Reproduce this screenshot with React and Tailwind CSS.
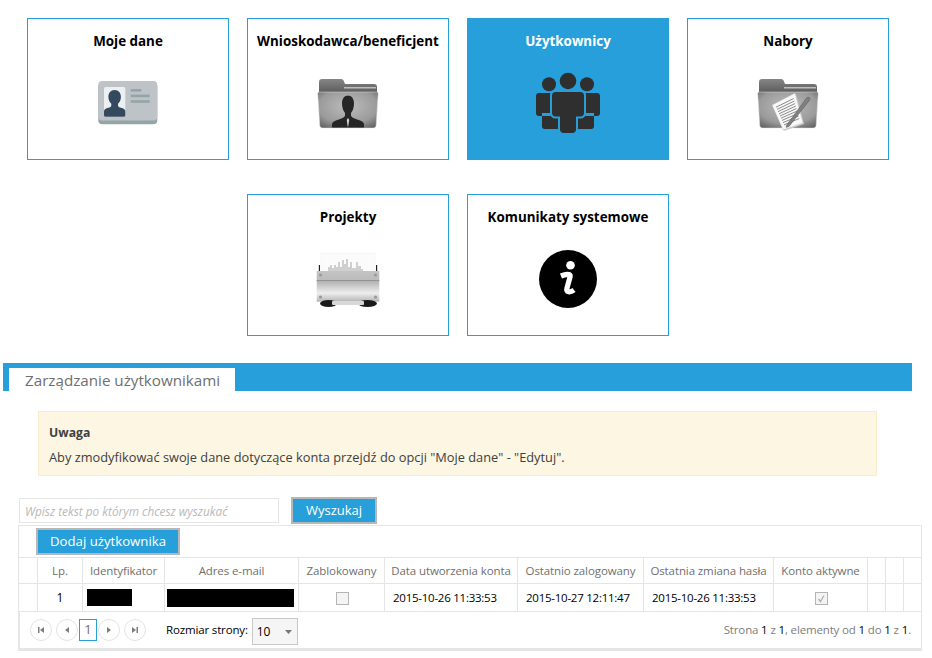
const BLUE = 'bg-[#269fdb]';

const CardIcon = () => (
  <svg width="64" height="64" viewBox="0 0 64 64">
    <rect x="2.3" y="12" width="59" height="41.3" rx="4" fill="#95a5a6" />
    <rect x="2.3" y="10" width="59" height="39.5" rx="4" fill="#bdc3c7" />
    <rect x="8" y="16" width="21.3" height="29.7" rx="1.5" fill="#ecf0f1" />
    <path d="M18.6 19c-4 0-6.2 3-6.2 7 0 3 1.3 5.300 2.900 6.700v1.800c0 1.200-1.300 1.800-3 2.300-2.300.7-4.300 1.400-4.300 3.500v3.900c0 .9.600 1.500 1.500 1.500h18.300c.9 0 1.500-.6 1.500-1.500v-3.900c0-2.100-2-2.800-4.300-3.500-1.700-.5-3-1.100-3-2.300v-1.800c1.600-1.400 2.900-3.700 2.900-6.700 0-4-2.200-7-6.300-7z" fill="#34495e" />
    <rect x="34.700" y="18" width="10.600" height="2.600" fill="#95a5a6" />
    <rect x="34.700" y="23.600" width="19" height="2.600" fill="#95a5a6" />
    <rect x="34.700" y="29.200" width="19" height="2.600" fill="#95a5a6" />
  </svg>
);

// wspolny szary folder dla ikon Wnioskodawca i Nabory
const Folder = ({ id, children }) => (
  <svg width="64" height="64" viewBox="0 0 64 64" className="blur-[0.35px]">
    <defs>
      <linearGradient id={`${id}-back`} x1="0" y1="0" x2="0" y2="1">
        <stop offset="0" stopColor="#858585" />
        <stop offset="1" stopColor="#4f4f4f" />
      </linearGradient>
      <radialGradient id={`${id}-front`} cx="0.5" cy="0.4" r="0.7">
        <stop offset="0" stopColor="#bdbdbd" />
        <stop offset="0.7" stopColor="#9a9a9a" />
        <stop offset="1" stopColor="#656565" />
      </radialGradient>
    </defs>
    <path d="M3 11c0-2 1-3 3-3h19c1.500 0 2.300.8 2.800 2l1.200 3h29c2 0 3 1 3 3v10H3z" fill={`url(#${id}-back)`} />
    <rect x="28" y="16" width="32" height="1.500" fill="#bdbdbd" />
    <path d="M1.700 22.500c0-1 .6-1.500 1.500-1.500h57.500c1 0 1.600.5 1.500 1.500l-2 31.500c-.1 2-1.200 3-3 3H6.700c-1.800 0-2.900-1-3-3z" fill={`url(#${id}-front)`} stroke="#e2e2e2" strokeWidth=".5" />
    {children}
  </svg>
);

const PersonFolderIcon = () => (
  <Folder id="person">
    <path d="M32.500 24.500c-4.500 0-6.500 3.500-6.500 8 0 3.500 1 7 3 9.500v2.500c0 1.500-3 3-7 4.200-4 1.200-6 2.300-6 4.800v3h32v-3c0-2.500-2-3.600-6-4.800-4-1.200-7-2.700-7-4.200V42c2-2.500 3-6 3-9.500 0-4.500-2-8-6.500-8z" fill="#262626" />
    <path d="M32 47l1.200 2-1 6.500h-.6l-.8-6.500z" fill="#d8d8d8" />
  </Folder>
);

const paperLines = [0.1, 0.2, 0.3, 0.4, 0.5, 0.6, 0.7, 0.8, 0.9];

const NotesFolderIcon = () => (
  <Folder id="notes">
    <path d="M17 35L40 23 48 53 28 60z" fill="#cfcfcf" />
    <path d="M16 34L39 22 47 52 27 59z" fill="#f8f8f8" stroke="#9a9a9a" strokeWidth=".3" />
    {paperLines.map((t) => (
      <path
        key={t}
        d={`M${19 + t * 10} ${34 + t * 22}L${37 + t * 7} ${25 + t * 25}`}
        stroke="#8c8c8c"
        strokeWidth="1"
      />
    ))}
    <path d="M30.700 54L50.500 27c.8-1 2.400-1 3-.2.6.8.5 1.600 0 2.400L33 55.500l-3 .8z" fill="#808080" stroke="#555" strokeWidth=".5" />
  </Folder>
);

const UsersIcon = () => (
  <svg width="64" height="64" viewBox="0 0 64 64" fill="#2f2f2f">
    <circle cx="32" cy="10" r="8.300" />
    <circle cx="13" cy="13.300" r="7" />
    <circle cx="51" cy="13.300" r="7" />
    <path d="M3 22h13v20H6v13.500c0 1.500 1 2.500 2.500 2.500h13c1.500 0 2.500-1 2.500-2.500V42h-8v3H3c-1.800 0-3-1-3-2.500V25c0-1.800 1.200-3 3-3z" />
    <path d="M61 22H48v20h10v13.500c0 1.500-1 2.500-2.500 2.500h-13c-1.500 0-2.500-1-2.500-2.500V42h8v3h13c1.800 0 3-1 3-2.500V25c0-1.800-1.200-3-3-3z" />
    <path
      d="M19.500 21h25c2 0 3.500 1.500 3.500 3.500V42c0 2-1.500 3.500-3.500 3.500H40V58.500c0 2-1.500 3.500-3.500 3.500h-9c-2 0-3.500-1.500-3.500-3.500V45.500h-4.500c-2 0-3.500-1.500-3.500-3.500V24.500c0-2 1.500-3.500 3.500-3.500z"
      stroke="#269fdb"
      strokeWidth="4"
      paintOrder="stroke"
    />
  </svg>
);

const CabinetIcon = () => (
  <svg width="64" height="64" viewBox="0 0 64 64" className="blur-[0.35px]">
    <defs>
      <linearGradient id="cab" x1="0" y1="0" x2="0" y2="1">
        <stop offset="0" stopColor="#c4c4c4" />
        <stop offset=".28" stopColor="#bcbcbc" />
        <stop offset=".32" stopColor="#b0b0b0" />
        <stop offset=".72" stopColor="#eeeeee" />
        <stop offset="1" stopColor="#b4b4b4" />
      </linearGradient>
    </defs>
    <rect x="5" y="6" width="54" height="20" fill="#fbfbfb" stroke="#f0f0f0" strokeWidth=".5" />
    <path d="M12 25v-5h2v-2h2v3h2v-3h2v2h2v-5h2v5h2v-7h2v4h2v-5h2v8h2v-5h2v6h4v-6h2v4h3v3h2v3z" fill="#cfcfcf" />
    <path d="M2.800 18h1.200v6H2.800zM60 18h1.200v6H60z" fill="#222" />
    <rect x="0.700" y="24" width="62.600" height="30.700" fill="url(#cab)" />
    <rect x="0.700" y="33" width="62.600" height=".8" fill="#8a8a8a" />
    <circle cx="4.500" cy="28" r="1.600" fill="#999" />
    <circle cx="59.500" cy="28" r="1.600" fill="#999" />
    <circle cx="4.500" cy="50" r="1.600" fill="#999" />
    <circle cx="59.500" cy="50" r="1.600" fill="#999" />
    <ellipse cx="12.500" cy="56.500" rx="8.500" ry="3.500" fill="#1a1a1a" />
    <ellipse cx="51.500" cy="56.500" rx="9.500" ry="3.500" fill="#1a1a1a" />
    <rect x="16" y="54" width="32" height="4" rx="1" fill="#d8d8d8" />
  </svg>
);

const InfoIcon = () => (
  <svg width="64" height="64" viewBox="0 0 64 64">
    <circle cx="32" cy="32" r="29" fill="#000" />
    <circle cx="34.500" cy="18.300" r="4.300" fill="#fff" />
    <path d="M25 29c4-1.700 9.800-3 9.200.5l-3.200 11.500c-1.300 4.500 3 5 7 2" fill="none" stroke="#fff" strokeWidth="5.200" />
  </svg>
);

const tiles = [
  { title: 'Moje dane', icon: <CardIcon /> },
  { title: 'Wnioskodawca/beneficjent', icon: <PersonFolderIcon /> },
  { title: 'Użytkownicy', icon: <UsersIcon />, active: true },
  { title: 'Nabory', icon: <NotesFolderIcon /> },
  { title: 'Projekty', icon: <CabinetIcon /> },
  { title: 'Komunikaty systemowe', icon: <InfoIcon /> },
];

const columns = [
  { name: '', width: 'w-[19px]' },
  { name: 'Lp.', width: 'w-[45px]' },
  { name: 'Identyfikator', width: 'w-[82px]' },
  { name: 'Adres e-mail', width: 'w-[134px]' },
  { name: 'Zablokowany', width: 'w-[86px]' },
  { name: 'Data utworzenia konta', width: 'w-[133px]' },
  { name: 'Ostatnio zalogowany', width: 'w-[126px]' },
  { name: 'Ostatnia zmiana hasła', width: 'w-[130px]' },
  { name: 'Konto aktywne', width: 'w-[94px]' },
  { name: '', width: 'w-[18px]' },
  { name: '', width: 'w-[18px]' },
  { name: '', width: 'w-[18px]' },
];

const headCell = 'border-r border-b border-[#e5e5e5] p-0 text-center font-normal text-[11.5px] tracking-[-0.1px] text-[#6f6f6f] whitespace-nowrap';
const bodyCell = 'border-r border-b border-[#e5e5e5] p-0 text-center text-[12px] text-black whitespace-nowrap';
const dateCell = 'border-r border-b border-[#e5e5e5] p-0 pl-[8px] text-left text-[11.5px] tracking-[-0.25px] text-black whitespace-nowrap';

const PagerButton = ({ path }) => (
  <button className="w-[22px] h-[22px] rounded-full border border-[#e3e3e3] flex items-center justify-center bg-white">
    <svg width="10" height="10" viewBox="0 0 10 10" fill="#7d7d7d">
      <path d={path} />
    </svg>
  </button>
);

const Checkbox = ({ checked }) => (
  <span className="inline-flex ml-[2px] w-[13px] h-[13px] align-middle items-center justify-center border border-[#b4b4b4] bg-[#f4f4f4]">
    {checked && (
      <svg width="11" height="11" viewBox="0 0 11 11" fill="none" stroke="#b0b0b0" strokeWidth="1.300">
        <path d="M2.500 6l2 2.500 3.500-6" />
      </svg>
    )}
  </span>
);

export default function App() {
  return (
    <div className="w-[932px] h-[658px] overflow-hidden bg-white font-['Open_Sans',sans-serif]">
      <div className="w-[916px] pt-[18px] flex flex-wrap justify-center gap-x-[18px] gap-y-[34px]">
        {tiles.map((tile) => (
          <div
            key={tile.title}
            className={`w-[202px] h-[142px] border border-[#269fdb] flex flex-col items-center pt-[12px] ${tile.active ? BLUE : 'bg-white'}`}
          >
            <h3 className={`h-[20px] leading-[20px] text-[13.4px] font-bold whitespace-nowrap ${tile.active ? 'text-white' : 'text-black'}`}>
              {tile.title}
            </h3>
            <div className="mt-[20px] w-[64px] h-[64px]">{tile.icon}</div>
          </div>
        ))}
      </div>

      <div className={`mt-[27px] ml-[3px] w-[909px] h-[28px] pl-[6px] pt-[5px] ${BLUE}`}>
        <div className="w-[226px] h-[23px] bg-white pl-[16px] text-[15.2px] leading-[24px] text-[#6f6f6f] whitespace-nowrap">
          Zarządzanie użytkownikami
        </div>
      </div>

      <div className="mt-[20px] ml-[38px] w-[839px] h-[65px] border border-[#faebcc] bg-[#fcf6e3] px-[10px] pt-[11px] text-[12.8px] text-[#404040]">
        <div className="font-bold text-[12.2px] leading-[20px]">Uwaga</div>
        <div className="leading-[20px] mt-[4px]">Aby zmodyfikować swoje dane dotyczące konta przejdź do opcji "Moje dane" - "Edytuj".</div>
      </div>

      <div className="mt-[21px] ml-[19px] flex items-center h-[27px]">
        <input
          readOnly
          placeholder="Wpisz tekst po którym chcesz wyszukać"
          className="w-[260px] h-[25px] border border-[#e5e5e5] px-[5px] text-[11.8px] italic placeholder:text-[#b9b9b9] outline-none"
        />
        <button className={`ml-[12px] w-[86px] h-[27px] border-2 border-[#b7b7b7] text-[13px] text-white ${BLUE}`}>Wyszukaj</button>
      </div>

      <div className="mt-[1px] ml-[18px] w-[904px] border border-[#e5e5e5] border-b-[3px]">
        <div className="h-[32px] border-b border-[#e5e5e5] pl-[17px] pt-[2px]">
          <button className={`w-[144px] h-[27px] border-2 border-[#b7b7b7] text-[13.2px] text-white ${BLUE}`}>Dodaj użytkownika</button>
        </div>
        <table className="table-fixed border-separate border-spacing-0 w-[902px]">
          <colgroup>
            {columns.map((col, i) => (
              <col key={i} className={col.width} />
            ))}
          </colgroup>
          <thead>
            <tr className="h-[26px]">
              {columns.map((col, i) => (
                <th key={i} className={headCell}>{col.name}</th>
              ))}
            </tr>
          </thead>
          <tbody>
            <tr className="h-[28px]">
              <td className={bodyCell}></td>
              <td className={bodyCell}>1</td>
              <td className={bodyCell}><div className="w-[45px] h-[17px] bg-black ml-[4px]" /></td>
              <td className={bodyCell}><div className="w-[127px] h-[18px] bg-black ml-[2px]" /></td>
              <td className={bodyCell}><Checkbox /></td>
              <td className={dateCell}>2015-10-26 11:33:53</td>
              <td className={dateCell}>2015-10-27 12:11:47</td>
              <td className={dateCell}>2015-10-26 11:33:53</td>
              <td className={bodyCell}><Checkbox checked /></td>
              <td className={bodyCell}></td>
              <td className={bodyCell}></td>
              <td className={bodyCell}></td>
            </tr>
          </tbody>
        </table>
        <div className="h-[36px] flex items-center pl-[10px] pr-[10px] border-l border-[#e5e5e5] text-[11.5px] tracking-[-0.15px]">
          <PagerButton path="M2 2h1.500v6H2zM8 2v6L4 5z" />
          <div className="ml-[4px]"><PagerButton path="M7 2v6L3 5z" /></div>
          <span className="ml-[1px] w-[18px] h-[22px] border border-[#269fdb] flex items-center justify-center text-[#6f6f6f] text-[13px]">1</span>
          <div className="ml-[1px]"><PagerButton path="M3 2v6l4-3z" /></div>
          <div className="ml-[4px]"><PagerButton path="M2 2v6l4-3zM6.500 2H8v6H6.500z" /></div>
          <span className="ml-[20px] text-black">Rozmiar strony:</span>
          <div className="ml-[4px] mt-[3px] w-[46px] h-[27px] border border-[#c8c8c8] bg-[#f5f5f5] flex items-center justify-between pl-[4px] pr-[5px] text-[12px] text-black">
            <span>10</span>
            <svg width="7" height="4" viewBox="0 0 7 4" fill="#777"><path d="M0 0h7L3.500 4z" /></svg>
          </div>
          <div className="ml-auto text-[#7d7d7d] whitespace-nowrap">
            Strona <span className="text-black">1</span> z <span className="text-black">1</span>, elementy od <span className="text-black">1</span> do <span className="text-black">1</span> z <span className="text-black">1</span>.
          </div>
        </div>
      </div>
    </div>
  );
}
